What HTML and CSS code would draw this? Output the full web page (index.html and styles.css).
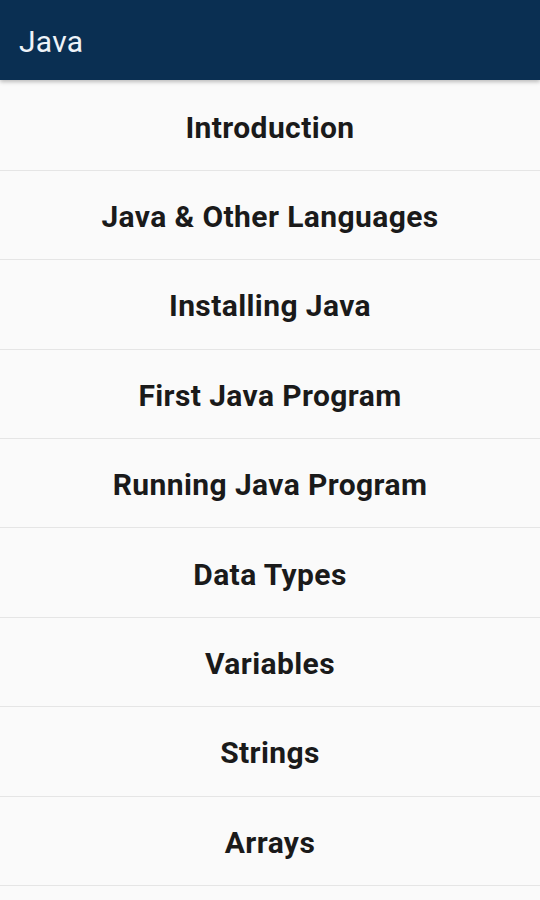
FILE: index.html
```html
<!DOCTYPE html>
<html>
<head>
<meta charset="utf-8">
<link rel="stylesheet" href="styles.css">
</head>
<body>
<header class="appbar"><span class="title">Java</span></header>
<ul class="menu">
<li class="item">Introduction</li>
<li class="item">Java &amp; Other Languages</li>
<li class="item">Installing Java</li>
<li class="item">First Java Program</li>
<li class="item">Running Java Program</li>
<li class="item">Data Types</li>
<li class="item">Variables</li>
<li class="item">Strings</li>
<li class="item">Arrays</li>
</ul>
</body>
</html>
```
FILE: styles.css
```css
html, body {
  margin: 0;
  padding: 0;
  background: #fafafa;
  overflow: hidden;
  height: 900px;
}
body {
  font-family: Roboto, "Liberation Sans", sans-serif;
}
.appbar {
  height: 80px;
  background: #0a2f52;
  display: flex;
  align-items: center;
  padding-left: 19px;
  box-shadow: 0 2px 4px rgba(0,0,0,0.25);
  position: relative;
  z-index: 1;
}
.title {
  color: #eef3f8;
  font-size: 30px;
  font-weight: 400;
  letter-spacing: 0.3px;
  margin-top: 2px;
}
.menu {
  list-style: none;
  margin: 0;
  padding: 1.5px 0 0;
}
.item {
  height: 85.4px;
  border-bottom: 1px solid #e5e5e5;
  display: flex;
  align-items: center;
  justify-content: center;
  font-size: 30px;
  font-weight: 700;
  letter-spacing: 0.4px;
  color: #1a1a1a;
  padding-top: 3px;
  box-sizing: content-box;
}
```
